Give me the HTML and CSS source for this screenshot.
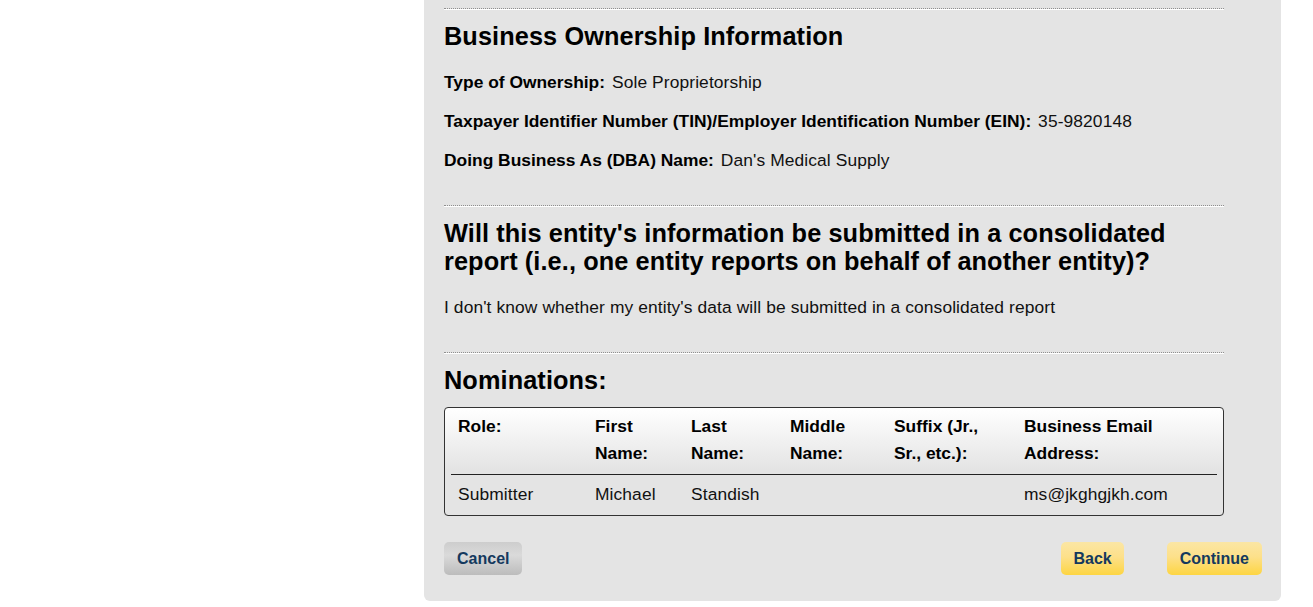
FILE: index.html
```html
<!DOCTYPE html>
<html lang="en">
<head>
    <meta charset="UTF-8">
    <title>Review Registration</title>
    <link rel="stylesheet" href="styles.css">
</head>
<body>
    <div class="panel">
        <div class="section">
            <hr class="divider">
            <h2 class="section-title">Business Ownership Information</h2>
            <p class="field"><span class="label">Type of Ownership:</span> Sole Proprietorship</p>
            <p class="field"><span class="label">Taxpayer Identifier Number (TIN)/Employer Identification Number (EIN):</span> 35-9820148</p>
            <p class="field field-last"><span class="label">Doing Business As (DBA) Name:</span> Dan's Medical Supply</p>

            <hr class="divider">
            <h2 class="section-title">Will this entity's information be submitted in a consolidated report (i.e., one entity reports on behalf of another entity)?</h2>
            <p class="field field-last">I don't know whether my entity's data will be submitted in a consolidated report</p>

            <hr class="divider">
            <h2 class="section-title nominations-title">Nominations:</h2>
            <div class="nominations">
                <div class="nom-row nom-head">
                    <div>Role:</div>
                    <div>First Name:</div>
                    <div>Last Name:</div>
                    <div>Middle Name:</div>
                    <div>Suffix (Jr., Sr., etc.):</div>
                    <div>Business Email Address:</div>
                </div>
                <div class="nom-row nom-body">
                    <div>Submitter</div>
                    <div>Michael</div>
                    <div>Standish</div>
                    <div></div>
                    <div></div>
                    <div>ms@jkghgjkh.com</div>
                </div>
            </div>
        </div>

        <div class="actions">
            <button class="btn btn-cancel">Cancel</button>
            <div class="actions-right">
                <button class="btn btn-primary btn-back">Back</button>
                <button class="btn btn-primary">Continue</button>
            </div>
        </div>
    </div>
</body>
</html>
```

FILE: styles.css
```css
* {
    box-sizing: border-box;
}

body {
    margin: 0;
    background: #ffffff;
    color: #000;
    font-family: "Liberation Sans", Arial, sans-serif;
    font-size: 17.4px;
}

.panel {
    margin-left: 424px;
    width: 857px;
    background: #e4e4e4;
    border-radius: 0 0 6px 6px;
    padding: 8px 19px 26px 20px;
}

.section {
    width: 780px;
}

.divider {
    margin: 0;
    height: 2px;
    border: none;
    border-top: 1px dotted #8f8f8f;
    border-bottom: 1px solid #ffffff;
}

.section-title {
    margin: 12px 0 22px;
    font-size: 25.3px;
    line-height: 28px;
    font-weight: bold;
    letter-spacing: 0.1px;
}

.field {
    margin: 0 0 19px;
    line-height: 20px;
    color: #111;
    letter-spacing: 0.1px;
}

.field-last {
    margin-bottom: 35px;
}

.label {
    font-weight: bold;
    color: #000;
    letter-spacing: 0;
    margin-right: 2px;
}

.nominations-title {
    margin-bottom: 13px;
}

.nominations {
    border: 1px solid #333;
    border-radius: 4px;
    padding: 0 6px;
    background: linear-gradient(to bottom, #ffffff 0px, #e4e4e4 62px, #e4e4e4 100%);
}

.nom-row {
    display: grid;
    grid-template-columns: 137px 96px 99px 104px 130px 1fr;
}

.nom-row > div {
    padding-left: 7px;
}

.nom-head {
    font-weight: bold;
    line-height: 27px;
    padding: 5px 0 7px;
    border-bottom: 1px solid #222;
}

.nom-head > div {
    padding-right: 14px;
}

.nom-body {
    line-height: 20px;
    padding: 9px 0 11px;
    color: #111;
    letter-spacing: 0.1px;
}

.actions {
    display: flex;
    justify-content: space-between;
    margin-top: 26px;
}

.actions-right {
    display: flex;
    gap: 43px;
}

.btn {
    height: 33px;
    padding: 0 13px;
    border: none;
    border-radius: 5px;
    font-family: "Liberation Sans", Arial, sans-serif;
    font-size: 16px;
    font-weight: bold;
    color: #14395e;
    cursor: pointer;
}

.btn-cancel {
    background: linear-gradient(to bottom, #cdcdcd, #dadada 40%, #bcbcbc);
}

.btn-primary {
    background: linear-gradient(to bottom, #fbe6a4, #fde08a 45%, #fdd542);
}

.btn-back {
    padding: 0 12px;
}
```
